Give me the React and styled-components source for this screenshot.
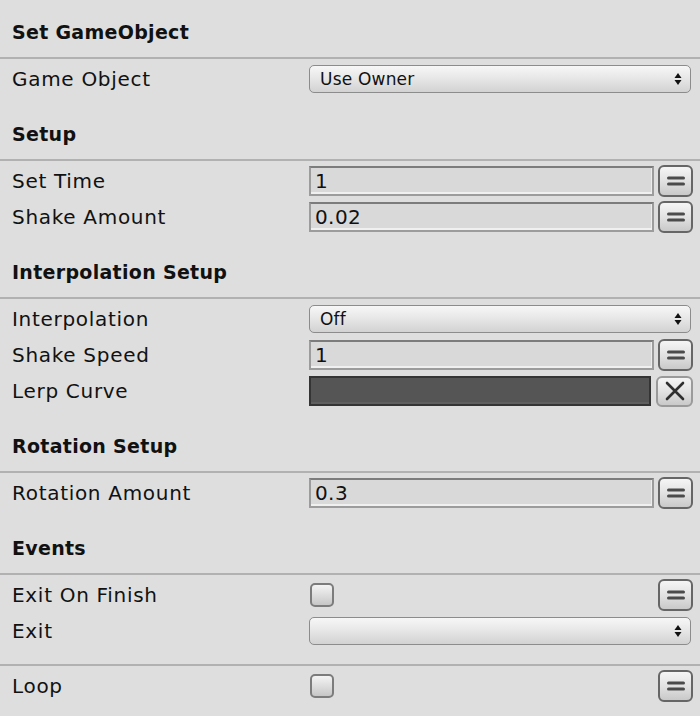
import React from 'react';
import styled, { createGlobalStyle } from 'styled-components';

const GlobalStyle = createGlobalStyle`
  html, body {
    margin: 0;
    padding: 0;
    background: #dedede;
  }
  body {
    font-family: "DejaVu Sans", "Liberation Sans", sans-serif;
    color: #111;
  }
`;

const Inspector = styled.div`
  width: 700px;
  padding-top: 7px;
  background: #dedede;
`;

const Section = styled.section`
  padding-bottom: 12px;
`;

const Title = styled.h3`
  display: flex;
  align-items: center;
  height: 50px;
  margin: 0;
  padding: 0 12px;
  font-size: 19px;
  font-weight: bold;
  letter-spacing: 0.3px;
`;

const Divider = styled.div`
  height: 2px;
  margin-top: ${(p) => p.gap || 0}px;
  background: #b1b1b1;
`;

const Body = styled.div`
  padding-top: 2px;
`;

const Row = styled.div`
  display: flex;
  align-items: center;
  height: 36px;
  padding: 0 7px 0 12px;
`;

const Label = styled.div`
  width: 297px;
  flex-shrink: 0;
  font-size: 20px;
  letter-spacing: 0.7px;
`;

const Controls = styled.div`
  flex: 1;
  display: flex;
  align-items: center;
  gap: 4px;
`;

const Popup = styled.div`
  flex: 1;
  display: flex;
  align-items: center;
  justify-content: space-between;
  box-sizing: border-box;
  height: 28px;
  margin-right: 2px;
  padding: 0 8px 0 10px;
  border: 1.5px solid #8c8c8c;
  border-radius: 5px;
  background: linear-gradient(#f7f7f7, #e6e6e6 50%, #d2d2d2);
  font-size: 17px;
  letter-spacing: 0.2px;
`;

const NumberField = styled.div`
  flex: 1;
  display: flex;
  align-items: center;
  box-sizing: border-box;
  height: 30px;
  padding: 0 4px;
  border: 2px solid #9c9c9c;
  border-top-color: #7c7c7c;
  background: #d9d9d9;
  box-shadow: inset 0 -2px 0 #f0f0f0, inset -1px 0 0 #ececec;
  font-size: 20px;
  letter-spacing: 0.4px;
`;

const CurveField = styled.div`
  flex: 1;
  box-sizing: border-box;
  height: 30px;
  margin-right: 1px;
  border: 2px solid #343434;
  background: #555;
  box-shadow: inset 0 -2px 0 #5f5f5f;
`;

const IconButton = styled.button`
  display: flex;
  align-items: center;
  justify-content: center;
  box-sizing: border-box;
  width: ${(p) => p.w || 35}px;
  height: ${(p) => p.h || 32}px;
  margin-left: auto;
  padding: 0;
  border: 2px solid ${(p) => p.border || '#666'};
  border-radius: 6px;
  background: linear-gradient(#f5f5f5, #e2e2e2 50%, #c9c9c9);
`;

const Checkbox = styled.div`
  box-sizing: border-box;
  width: 24px;
  height: 24px;
  margin-left: 1px;
  border: 2px solid #7c7c7c;
  border-radius: 5px;
  background: linear-gradient(#f4f4f4, #d9d9d9 60%, #c6c6c6);
`;

const Arrows = () => (
  <svg width="8" height="14" viewBox="0 0 8 14">
    <path d="M4 1 L7.5 6 L0.5 6 Z" fill="#111" />
    <path d="M4 13 L7.5 8 L0.5 8 Z" fill="#111" />
  </svg>
);

const EqualsIcon = () => (
  <svg width="20" height="12" viewBox="0 0 20 12">
    <rect x="1" y="1.5" width="18" height="3" rx="1.5" fill="#4b4b4b" />
    <rect x="1" y="7.5" width="18" height="3" rx="1.5" fill="#4b4b4b" />
  </svg>
);

const CrossIcon = () => (
  <svg width="22" height="22" viewBox="0 0 22 22">
    <path d="M3 3 L19 19 M19 3 L3 19" stroke="#2f2f2f" strokeWidth="2.6" strokeLinecap="round" />
  </svg>
);

const PopupRow = ({ label, value }) => (
  <Row>
    <Label>{label}</Label>
    <Controls>
      <Popup>
        <span>{value}</span>
        <Arrows />
      </Popup>
    </Controls>
  </Row>
);

const NumberRow = ({ label, value }) => (
  <Row>
    <Label>{label}</Label>
    <Controls>
      <NumberField>{value}</NumberField>
      <IconButton>
        <EqualsIcon />
      </IconButton>
    </Controls>
  </Row>
);

const CurveRow = ({ label }) => (
  <Row>
    <Label>{label}</Label>
    <Controls>
      <CurveField />
      <IconButton w={37} h={31} border="#9a9a9a">
        <CrossIcon />
      </IconButton>
    </Controls>
  </Row>
);

const CheckRow = ({ label }) => (
  <Row>
    <Label>{label}</Label>
    <Controls>
      <Checkbox />
      <IconButton>
        <EqualsIcon />
      </IconButton>
    </Controls>
  </Row>
);

export default function App() {
  return (
    <Inspector>
      <GlobalStyle />
      <Title>Set GameObject</Title>
      <Divider />
      <Section>
        <Body>
          <PopupRow label="Game Object" value="Use Owner" />
        </Body>
      </Section>

      <Title>Setup</Title>
      <Divider />
      <Section>
        <Body>
          <NumberRow label="Set Time" value="1" />
          <NumberRow label="Shake Amount" value="0.02" />
        </Body>
      </Section>

      <Title>Interpolation Setup</Title>
      <Divider />
      <Section>
        <Body>
          <PopupRow label="Interpolation" value="Off" />
          <NumberRow label="Shake Speed" value="1" />
          <CurveRow label="Lerp Curve" />
        </Body>
      </Section>

      <Title>Rotation Setup</Title>
      <Divider />
      <Section>
        <Body>
          <NumberRow label="Rotation Amount" value="0.3" />
        </Body>
      </Section>

      <Title>Events</Title>
      <Divider />
      <Section>
        <Body>
          <CheckRow label="Exit On Finish" />
          <PopupRow label="Exit" value="" />
        </Body>
      </Section>

      <Divider gap={3} />
      <Section>
        <Body>
          <CheckRow label="Loop" />
        </Body>
      </Section>
      <Divider />
    </Inspector>
  );
}
